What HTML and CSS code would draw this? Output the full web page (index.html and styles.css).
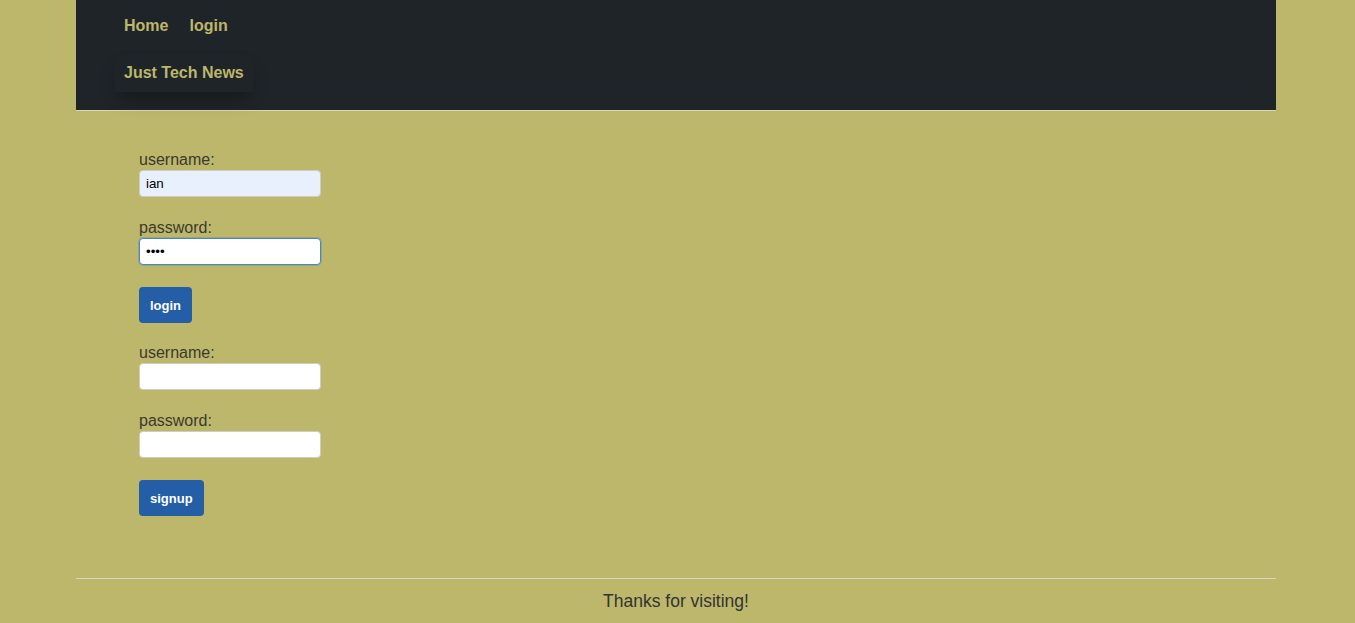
FILE: index.html
```html
<!DOCTYPE html>
<html lang="en">
<head>
<meta charset="utf-8">
<title>Just Tech News</title>
<link rel="stylesheet" href="styles.css">
</head>
<body>
<div class="wrapper">
  <header class="site-header">
    <nav class="nav">
      <a href="#" class="nav-link">Home</a>
      <a href="#" class="nav-link">login</a>
    </nav>
    <h1 class="brand"><a href="#">Just Tech News</a></h1>
  </header>
  <main class="main">
    <form class="form">
      <div class="field">
        <label class="label" for="u1">username:</label>
        <input class="input input-autofill" id="u1" type="text" value="ian">
      </div>
      <div class="field">
        <label class="label" for="p1">password:</label>
        <input class="input input-focus" id="p1" type="password" value="ianp">
      </div>
      <button class="btn" type="button">login</button>
    </form>
    <form class="form">
      <div class="field">
        <label class="label" for="u2">username:</label>
        <input class="input" id="u2" type="text">
      </div>
      <div class="field">
        <label class="label" for="p2">password:</label>
        <input class="input" id="p2" type="password">
      </div>
      <button class="btn" type="button">signup</button>
    </form>
  </main>
  <footer class="footer">Thanks for visiting!</footer>
</div>
</body>
</html>
```
FILE: styles.css
```css
html, body {
  margin: 0;
  padding: 0;
}
body {
  background: #bdb76b;
  font-family: "Liberation Sans", Arial, sans-serif;
  color: #333;
}
.wrapper {
  width: 1200px;
  margin: 0 auto 0 76px;
}
.site-header {
  background: #1f2429;
  height: 110px;
  border-bottom: 1px solid #d9d6c0;
  padding: 0 48px;
  box-sizing: content-box;
  display: flex;
  flex-direction: column;
  align-items: flex-start;
}
.nav {
  display: flex;
  gap: 21px;
  padding-top: 17px;
}
.nav-link {
  color: #bdb76b;
  font-weight: bold;
  font-size: 16px;
  line-height: 18px;
  text-decoration: none;
}
.brand {
  margin: 20px 0 0 -9px;
  padding: 9px 9px 10px;
  font-size: 16px;
  line-height: 18px;
  box-shadow: 0 10px 18px -4px rgba(0, 0, 0, 0.3);
}
.brand a {
  color: #bdb76b;
  text-decoration: none;
}
.main {
  padding: 40px 63px 0;
  height: 428px;
  box-sizing: border-box;
}
.form {
  display: flex;
  flex-direction: column;
  align-items: flex-start;
  margin-bottom: 21px;
}
.field {
  display: flex;
  flex-direction: column;
  margin-bottom: 22px;
}
.label {
  font-size: 16px;
  line-height: 18px;
  color: #3a3a30;
}
.input {
  width: 182px;
  height: 27px;
  box-sizing: border-box;
  border: 1px solid #cfcdc0;
  border-radius: 4px;
  background: #fff;
  font-family: "Liberation Sans", Arial, sans-serif;
  font-size: 13.33px;
  padding: 1px 6px;
  margin: 1px 0 0;
  outline: none;
}
.input-autofill {
  background: #e8f0fe;
  color: #000;
}
.input-focus {
  border: 1px solid #4d86b8;
  box-shadow: 0 0 0 1px rgba(77, 134, 184, 0.35);
}
.btn {
  background: #235ea6;
  color: #fff;
  border: none;
  border-radius: 4px;
  height: 36px;
  padding: 0 11px;
  font-family: "Liberation Sans", Arial, sans-serif;
  font-weight: bold;
  font-size: 13px;
  cursor: pointer;
}
.footer {
  border-top: 1px solid #d9d6c0;
  margin-top: 39px;
  text-align: center;
  font-size: 17.5px;
  line-height: 22px;
  padding-top: 11px;
  color: #333;
}
```
